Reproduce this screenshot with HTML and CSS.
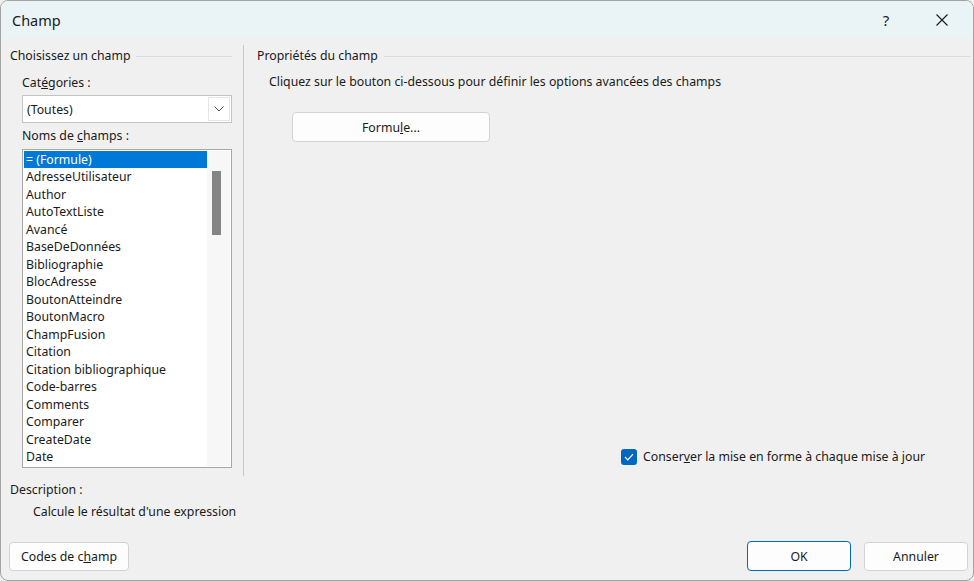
FILE: index.html
```html
<!doctype html>
<html>
<head>
    <meta charset="utf-8">
    <title>Champ</title>
    <link rel="stylesheet" href="styles.css">
</head>
<body>
<div class="window">
    <div class="titlebar">
        <span class="title">Champ</span>
        <span class="tb-help">?</span>
        <span class="tb-close">
            <svg width="12" height="12" viewBox="0 0 12 12"><path d="M0.5 0.5 L11.5 11.5 M11.5 0.5 L0.5 11.5" stroke="#1a1a1a" stroke-width="1.1" fill="none"/></svg>
        </span>
    </div>

    <div class="main">
        <div class="left">
            <div class="legend">Choisissez un champ</div>
            <div class="label lbl-cat">Cat<u>é</u>gories :</div>
            <div class="combo">
                <span class="combo-text">(Toutes)</span>
                <span class="combo-btn">
                    <svg width="10" height="6" viewBox="0 0 10 6"><path d="M0.5 0.5 L5 5 L9.5 0.5" stroke="#555" stroke-width="1" fill="none"/></svg>
                </span>
            </div>
            <div class="label lbl-noms">Noms de <u>c</u>hamps :</div>
            <div class="listbox">
                <ul class="items">
                    <li class="sel">= (Formule)</li>
                    <li>AdresseUtilisateur</li>
                    <li>Author</li>
                    <li>AutoTextListe</li>
                    <li>Avancé</li>
                    <li>BaseDeDonnées</li>
                    <li>Bibliographie</li>
                    <li>BlocAdresse</li>
                    <li>BoutonAtteindre</li>
                    <li>BoutonMacro</li>
                    <li>ChampFusion</li>
                    <li>Citation</li>
                    <li>Citation bibliographique</li>
                    <li>Code-barres</li>
                    <li>Comments</li>
                    <li>Comparer</li>
                    <li>CreateDate</li>
                    <li>Date</li>
                </ul>
                <div class="scrollbar"><div class="thumb"></div></div>
            </div>
        </div>

        <div class="right">
            <div class="legend">Propriétés du champ</div>
            <div class="hint">Cliquez sur le bouton ci-dessous pour définir les options avancées des champs</div>
            <div class="btn btn-formule">Formu<u>l</u>e...</div>
            <div class="check-row">
                <span class="checkbox">
                    <svg width="10" height="8" viewBox="0 0 10 8"><path d="M1 4 L3.8 6.8 L9 1.2" stroke="#fff" stroke-width="1.2" fill="none"/></svg>
                </span>
                <span>Conser<u>v</u>er la mise en forme à chaque mise à jour</span>
            </div>
        </div>
    </div>

    <div class="desc">
        <div class="desc-title">Description :</div>
        <div class="desc-text">Calcule le résultat d'une expression</div>
    </div>

    <div class="footer">
        <div class="btn btn-codes">Codes de c<u>h</u>amp</div>
        <div class="spacer"></div>
        <div class="btn btn-ok">OK</div>
        <div class="btn btn-cancel">Annuler</div>
    </div>
</div>
</body>
</html>
```

FILE: styles.css
```css
html, body { margin: 0; padding: 0; background: #f0f0f0; }
body { font-family: "Noto Sans", "Open Sans", sans-serif; font-size: 12.3px; color: #1a1a1a; }

.window {
    width: 974px; height: 581px; box-sizing: border-box;
    border: 1px solid #a3a3a3; border-radius: 8px; overflow: hidden;
    background: #f0f0f0; display: flex; flex-direction: column;
}

/* barre de titre */
.titlebar { height: 37px; background: #eaf4f7; display: flex; align-items: center; }
.title { margin-left: 11px; font-size: 14.5px; flex: 1; }
.tb-help { width: 24px; text-align: center; font-size: 15px; margin-right: 32px; }
.tb-close { width: 24px; display: flex; justify-content: center; margin-right: 19px; }

.main { display: flex; height: 431px; margin-top: 7px; }
.left { width: 243px; border-right: 1px solid #c8c8c8; padding-left: 9px; box-sizing: border-box; }
.right { flex: 1; display: flex; flex-direction: column; padding-left: 13px; }

.legend { display: flex; align-items: center; line-height: 18px; margin-top: 2px; }
.legend::after { content: ""; flex: 1; height: 1px; background: #dcdcdc; margin-left: 6px; }
.left .legend { margin-right: 11px; }
.right .legend { margin-right: 2px; }

.label { line-height: 18px; margin-left: 12px; }
.lbl-cat { margin-top: 9px; }
.lbl-noms { margin-top: 4px; }

.combo {
    margin: 3px 0 0 12px; width: 210px; height: 28px; box-sizing: border-box;
    background: #fff; border: 1px solid #c4c4c4; display: flex; align-items: center;
}
.combo-text { flex: 1; padding-left: 4px; }
.combo-btn {
    width: 22px; height: 24px; margin-right: 1px; border: 1px solid #e6e6e6; box-sizing: border-box;
    display: flex; align-items: center; justify-content: center;
}

.listbox {
    margin: 4px 0 0 12px; width: 210px; height: 319px; box-sizing: border-box;
    background: #fff; border: 1px solid #a8a8a8; display: flex; padding: 1px;
}
.items { list-style: none; margin: 0; padding: 0; width: 183px; overflow: hidden; }
.items li { height: 17.5px; line-height: 17px; padding-left: 2px; white-space: nowrap; }
.items li.sel { background: #0078d7; color: #fff; height: 17px; }
.scrollbar { flex: 1; background: #f7f7f7; position: relative; }
.thumb { position: absolute; left: 5px; top: 20px; width: 9px; height: 64px; background: #858585; }

.hint { line-height: 18px; margin: 8px 0 0 12px; }

.btn {
    background: #fdfdfd; border: 1px solid #d3d3d3; border-radius: 4px; box-sizing: border-box;
    display: flex; align-items: center; justify-content: center;
}
.btn-formule { width: 198px; height: 30px; margin: 21px 0 0 35px; }

.check-row { margin: auto 0 10px 364px; display: flex; align-items: center; line-height: 18px; }
.checkbox {
    width: 16px; height: 16px; background: #0067c0; border-radius: 3px; margin-right: 6px;
    display: flex; align-items: center; justify-content: center;
}

.desc { padding-left: 9px; }
.desc-title { line-height: 18px; margin-top: 5px; }
.desc-text { line-height: 18px; margin: 4px 0 0 23px; }

.footer { display: flex; margin-top: auto; margin-bottom: 9px; padding: 0 5px 0 8px; align-items: flex-end; }
.spacer { flex: 1; }
.btn-codes { width: 120px; height: 29px; }
.btn-ok { width: 104px; height: 30px; border-color: #0067c0; margin-right: 13px; }
.btn-cancel { width: 104px; height: 29px; }
```
